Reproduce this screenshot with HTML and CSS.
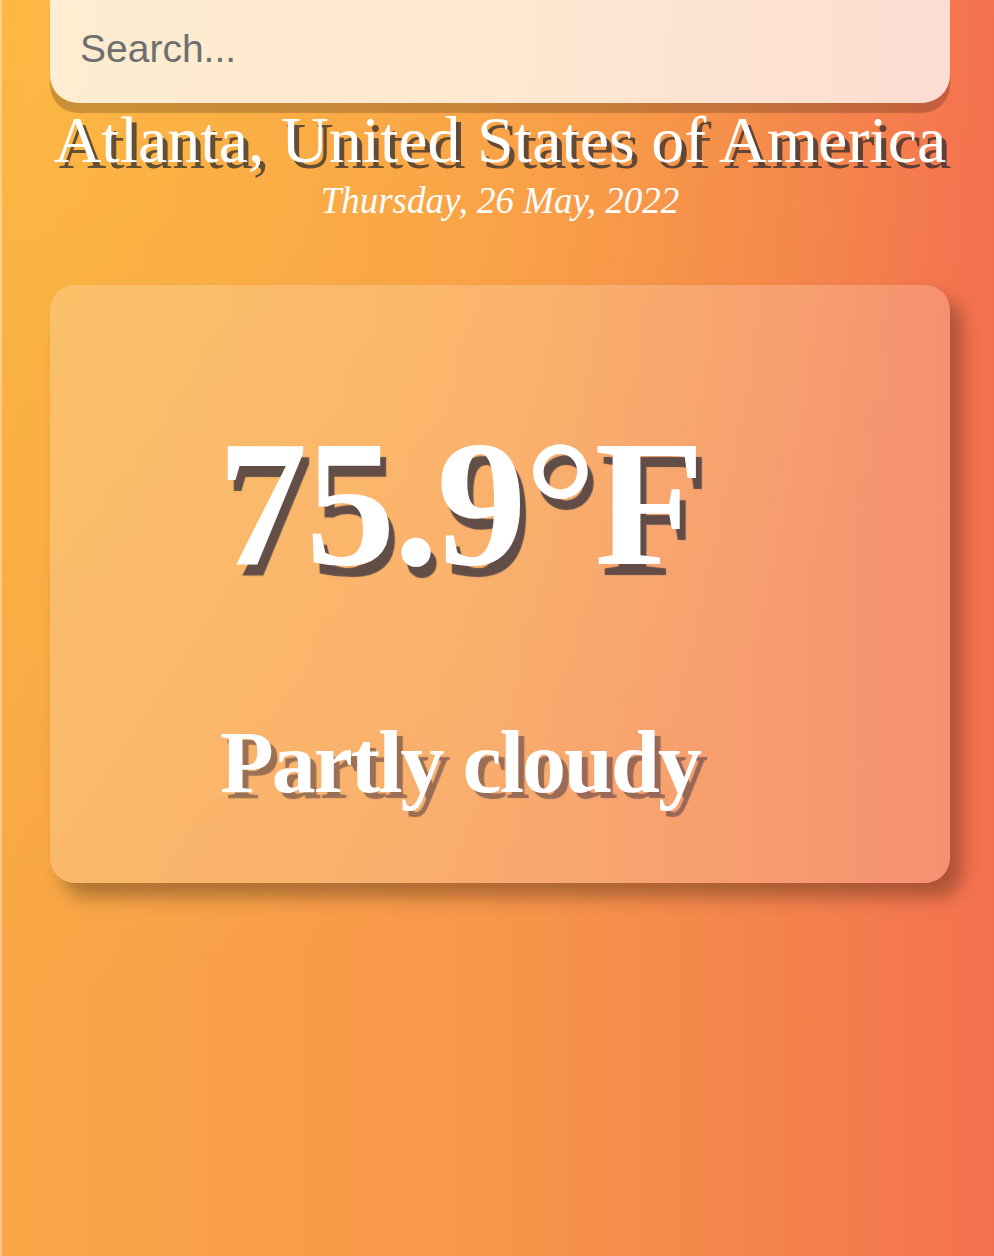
FILE: index.html
```html
<!DOCTYPE html>
<html lang="en">
<head>
<meta charset="utf-8">
<title>Weather</title>
<link rel="stylesheet" href="styles.css">
</head>
<body>
<main class="app">
  <div class="search-box">
    <input class="search-bar" type="text" placeholder="Search...">
  </div>
  <section class="location-box">
    <h1 class="location">Atlanta, United States of America</h1>
    <div class="date">Thursday, 26 May, 2022</div>
  </section>
  <section class="weather-box">
    <div class="temp">75.9°F</div>
    <div class="weather">Partly cloudy</div>
  </section>
</main>
</body>
</html>
```

FILE: styles.css
```css
html, body {
  margin: 0;
  padding: 0;
}

body {
  min-height: 1256px;
  background:
    radial-gradient(circle at 0 0, rgba(255, 200, 64, 0.55) 0, rgba(255, 200, 64, 0) 1000px),
    linear-gradient(90deg, #f9a646 0%, #f8984a 45%, #f7934a 55%, #f47f4d 83%, #f4714f 100%);
  font-family: "Liberation Serif", "Times New Roman", serif;
  border-left: 2px solid rgba(255, 255, 255, 0.35);
  box-sizing: border-box;
}

.app {
  width: 900px;
  margin-left: 48px;
  display: flex;
  flex-direction: column;
}

.search-box {
  display: flex;
}

.search-bar {
  flex: 1;
  height: 103px;
  box-sizing: border-box;
  padding: 0 30px 6px;
  border: none;
  outline: none;
  border-radius: 0 0 28px 28px;
  background: rgba(255, 255, 255, 0.75);
  box-shadow: 0 10px 1px rgba(0, 0, 0, 0.2);
  font-family: "Liberation Sans", Arial, sans-serif;
  font-size: 39px;
  color: #6f6f6f;
}

.search-bar::placeholder {
  color: #6f6f6f;
  opacity: 1;
}

.location-box {
  display: flex;
  flex-direction: column;
  align-items: center;
  color: #fff;
}

.location {
  margin: 4px 0 0;
  font-size: 66px;
  font-weight: 400;
  line-height: 1;
  white-space: nowrap;
  text-shadow: 5px 6px 0 rgba(40, 40, 45, 0.72);
}

.date {
  margin-top: 9px;
  font-size: 37px;
  font-style: italic;
  line-height: 1;
}

.weather-box {
  margin-top: 66px;
  padding: 129px 80px 76px 0;
  border-radius: 25px;
  background: rgba(255, 255, 255, 0.2);
  box-shadow: 12px 14px 18px rgba(0, 0, 0, 0.3);
  display: flex;
  flex-direction: column;
  align-items: center;
  color: #fff;
}

.temp {
  font-size: 180px;
  font-weight: 700;
  line-height: 1;
  letter-spacing: -2px;
  text-shadow: 6px 11px 1px rgba(70, 60, 65, 0.85);
}

.weather {
  margin-top: 125px;
  font-size: 88px;
  font-weight: 700;
  line-height: 1;
  letter-spacing: -2px;
  text-shadow: 6px 6px 1px rgba(60, 45, 60, 0.5);
}
```
